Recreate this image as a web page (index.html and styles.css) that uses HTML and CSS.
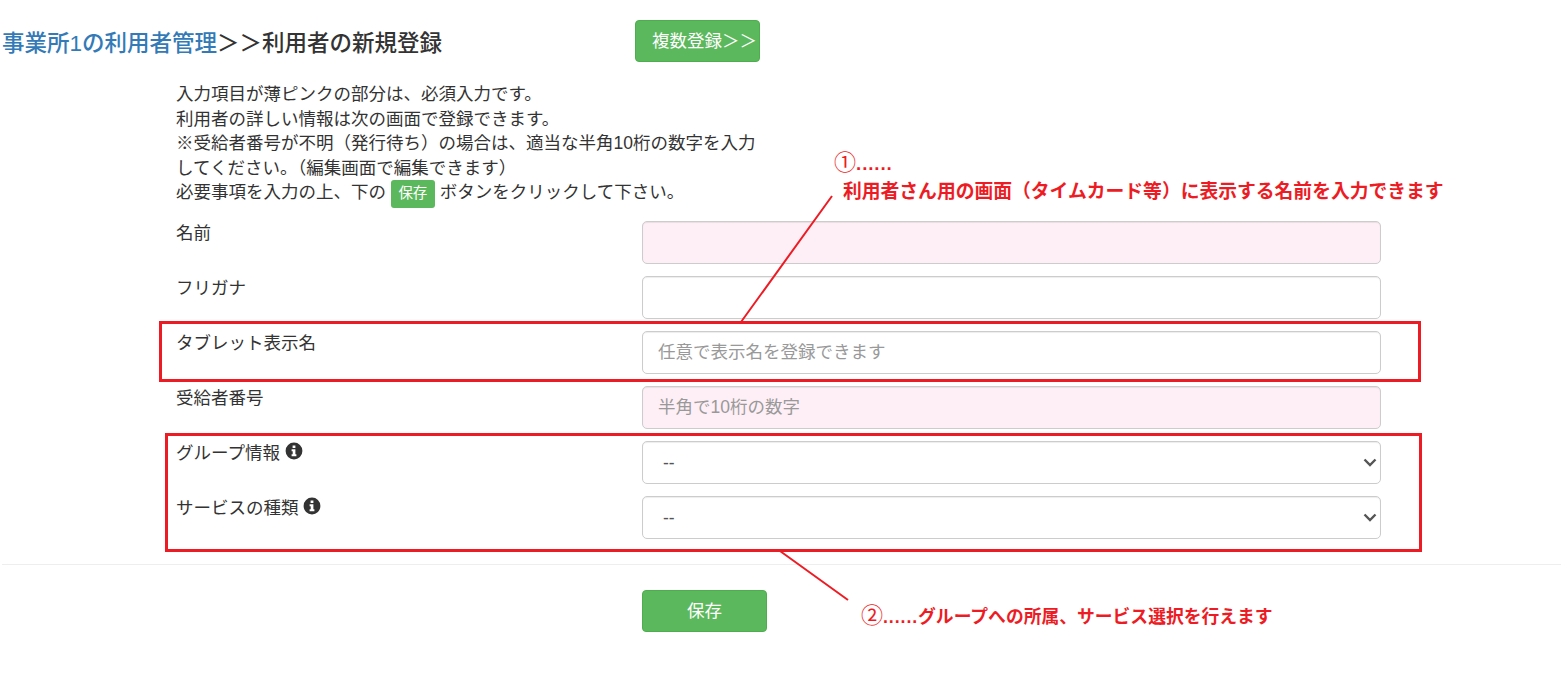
FILE: index.html
```html
<!DOCTYPE html>
<html lang="ja">
<head>
<meta charset="utf-8">
<title>利用者の新規登録</title>
<link rel="stylesheet" href="styles.css">
</head>
<body>
<div class="page">
  <header class="head">
    <h3 class="title"><a href="#">事業所1の利用者管理</a>＞＞利用者の新規登録</h3>
    <a class="btn btn-head" href="#">複数登録＞＞</a>
  </header>
  <div class="intro">
    入力項目が薄ピンクの部分は、必須入力です。<br>
    利用者の詳しい情報は次の画面で登録できます。<br>
    ※受給者番号が不明（発行待ち）の場合は、適当な半角10桁の数字を入力してください。（編集画面で編集できます）<br>
    必要事項を入力の上、下の <span class="badge">保存</span> ボタンをクリックして下さい。
  </div>
  <form class="form">
    <label class="lbl">名前</label>
    <input class="ctl req" type="text">
    <label class="lbl">フリガナ</label>
    <input class="ctl" type="text">
    <label class="lbl">タブレット表示名</label>
    <input class="ctl" type="text" placeholder="任意で表示名を登録できます">
    <label class="lbl">受給者番号</label>
    <input class="ctl req" type="text" placeholder="半角で10桁の数字">
    <label class="lbl">グループ情報 <svg class="info" viewBox="0 0 18 18"><path fill-rule="evenodd" d="M9 .6a8.4 8.4 0 1 0 0 16.8A8.4 8.4 0 0 0 9 .6ZM7.6 3.4h2.8v2.500H7.600ZM6.600 7.200h3.800v5h1v2H6.600v-2h1.100v-3H6.600Z"/></svg></label>
    <select class="ctl sel"><option>--</option></select>
    <label class="lbl">サービスの種類 <svg class="info" viewBox="0 0 18 18"><path fill-rule="evenodd" d="M9 .6a8.4 8.4 0 1 0 0 16.8A8.4 8.4 0 0 0 9 .6ZM7.6 3.4h2.8v2.500H7.600ZM6.600 7.200h3.800v5h1v2H6.600v-2h1.100v-3H6.600Z"/></svg></label>
    <select class="ctl sel"><option>--</option></select>
  </form>
  <hr class="rule">
  <div class="actions"><a class="btn btn-save" href="#">保存</a></div>

  <div class="mark mark-a"></div>
  <div class="mark mark-b"></div>
  <svg class="leaders" viewBox="0 0 1561 682">
    <path d="M832 196 741 322M780 551 848 600"/>
  </svg>
  <p class="note note-a"><span class="num">①</span><span class="dots">......</span><br>利用者さん用の画面（タイムカード等）に表示する名前を入力できます</p>
  <p class="note note-b"><span class="num">②</span><span class="dots">......</span>グループへの所属、サービス選択を行えます</p>
</div>
</body>
</html>
```
FILE: styles.css
```css
* { box-sizing: border-box; }
html, body { margin: 0; height: 100%; overflow: hidden; background: #fff; }
body {
  font-family: "Liberation Sans", "Noto Sans CJK JP", sans-serif;
  font-size: 17.5px;
  line-height: 24.6px;
  color: #333;
}
.page { position: relative; width: 1561px; height: 682px; padding-top: 20px; }
.head { display: flex; align-items: flex-start; height: 42px; padding-left: 2px; }
.title { width: 633px; margin: 0; font-size: 22.5px; line-height: 47px; font-weight: 500; }
.title a { color: #337ab7; text-decoration: none; }
.btn {
  display: flex; align-items: center; justify-content: center;
  height: 42px; width: 125px;
  background: #5cb85c; border: 1px solid #4cae4c; border-radius: 4px;
  color: #fff; text-decoration: none;
}
.btn-head { justify-content: flex-start; padding-left: 16px; white-space: nowrap; }
.intro { width: 590px; margin: 20px 0 0 176px; }
.badge {
  display: inline-block; height: 28px; width: 44px;
  background: #5cb85c; border-radius: 3px; color: #fff;
  font-size: 14.5px; line-height: 27px; text-align: center; vertical-align: 0;
}
.form {
  display: grid; grid-template-columns: 466px 739px; grid-auto-rows: 43px;
  row-gap: 12px; margin: 13px 0 0 176px;
}
.lbl { display: block; }
.ctl {
  width: 100%; height: 43px; padding: 0 15px;
  font: inherit; color: #555; background: #fff;
  border: 1px solid #ccc; border-radius: 5px;
  box-shadow: inset 0 1px 1px rgba(0,0,0,.075);
}
.ctl::placeholder { color: #999; opacity: 1; }
.req { background: #fdeff5; }
.sel {
  appearance: none; padding-left: 20px;
  background: #fff url("data:image/svg+xml,%3Csvg xmlns='http://www.w3.org/2000/svg' width='14' height='9' viewBox='0 0 14 9'%3E%3Cpath d='M1.5 1.5 7 7l5.500-5.500' fill='none' stroke='%23555' stroke-width='2.400'/%3E%3C/svg%3E") no-repeat right 3px center;
}
.info { width: 18px; height: 18px; vertical-align: -1px; fill: #333; }
.rule { margin: 25px 0 0 2px; border: 0; border-top: 1px solid #eee; }
.actions { margin: 25px 0 0 642px; }
.mark { position: absolute; border: 3px solid #ed1c24; }
.mark-a { left: 159px; top: 321px; width: 1262px; height: 61px; }
.mark-b { left: 165px; top: 433px; width: 1257px; height: 119px; }
.leaders { position: absolute; left: 0; top: 0; width: 1561px; height: 682px; pointer-events: none; }
.leaders path { fill: none; stroke: #ed1c24; stroke-width: 2; }
.note { position: absolute; margin: 0; color: #ed1c24; font-size: 17.8px; line-height: 28px; font-weight: 700; white-space: nowrap; }
.note .num { font-weight: 400; font-size: 22px; line-height: 20px; }
.note .dots { letter-spacing: .9px; }
.note-a { left: 843px; top: 150px; font-size: 18.8px; }
.note-a .num { margin-left: -9px; }
.note-b { left: 861px; top: 603px; }
```
